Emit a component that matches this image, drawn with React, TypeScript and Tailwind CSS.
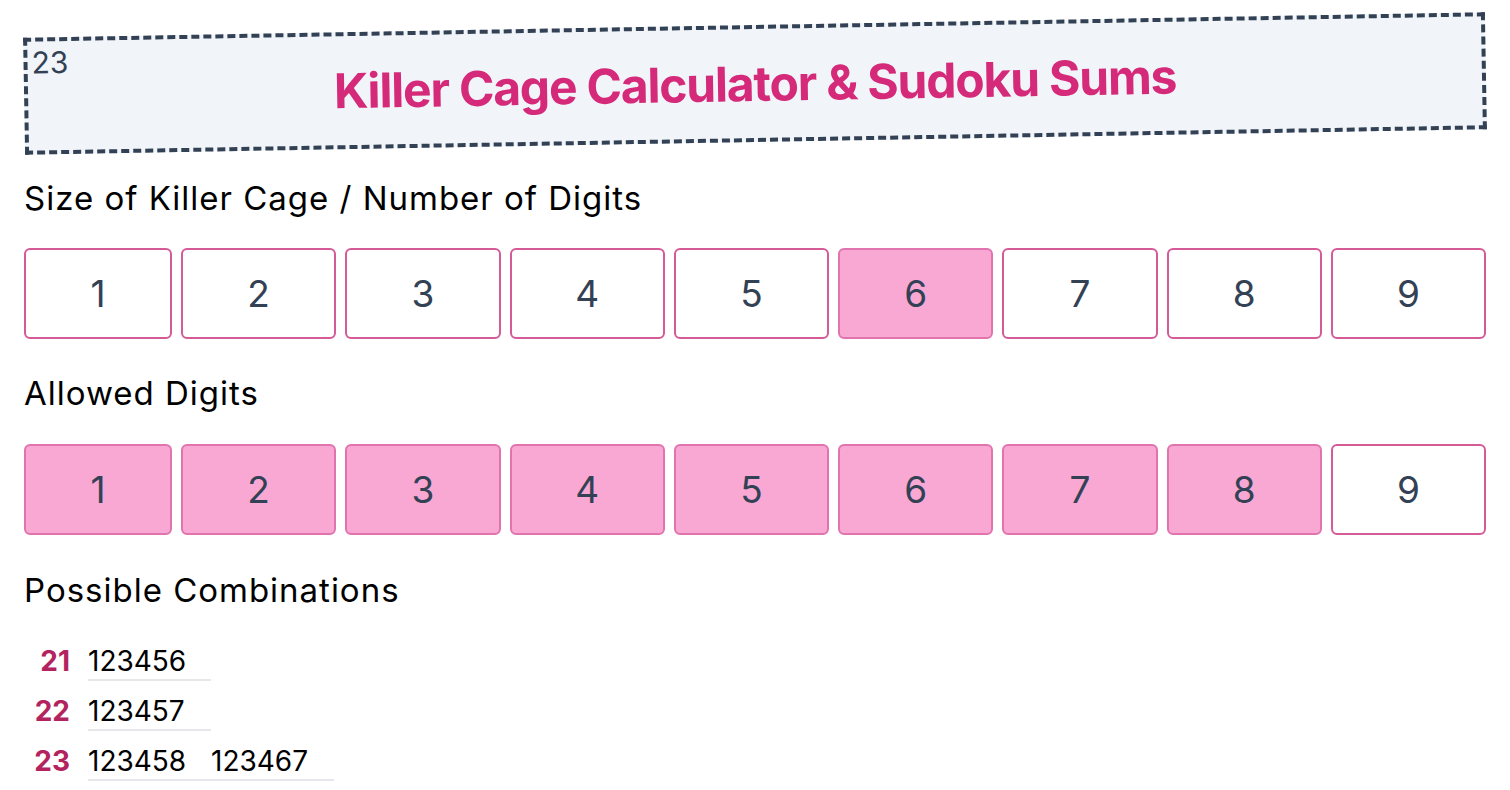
import React from "react";

const digits = [1, 2, 3, 4, 5, 6, 7, 8, 9];

function DigitRow({ selected }: { selected: (d: number) => boolean }) {
  return (
    <div className="grid grid-cols-[148px_repeat(8,1fr)] gap-[9px]">
      {digits.map((d) => (
        <button
          key={d}
          className={
            "h-[91px] rounded-md border-2 text-[37px] text-[#334155] flex items-center justify-center " +
            (selected(d)
              ? "bg-[#f9a8d4] border-[#e174ae]"
              : "bg-white border-[#d45a98]")
          }
        >
          {d}
        </button>
      ))}
    </div>
  );
}

const combos: [number, string[]][] = [
  [21, ["123456"]],
  [22, ["123457"]],
  [23, ["123458", "123467"]],
];

export default function App() {
  return (
    <div
      className="min-h-screen bg-white px-6 pt-[25px] text-black"
      style={{ fontFamily: "Inter, 'Noto Sans', sans-serif" }}
    >
      <div className="relative h-[117px] -rotate-1 border-4 border-dashed border-[#334155] bg-[#f1f5f9] flex items-center justify-center">
        <span className="absolute left-[4px] top-[6px] text-[30px] leading-none text-[#334155]">
          23
        </span>
        <h1 className="text-[48px] font-bold tracking-tight text-[#d5297a] leading-none">
          Killer Cage Calculator &amp; Sudoku Sums
        </h1>
      </div>

      <h2 className="mt-[38px] text-[33px] leading-[36px] tracking-[0.03em]">
        Size of Killer Cage / Number of Digits
      </h2>
      <div className="mt-[32px]">
        <DigitRow selected={(d) => d === 6} />
      </div>

      <h2 className="mt-[36px] text-[33px] leading-[36px] tracking-[0.03em]">
        Allowed Digits
      </h2>
      <div className="mt-[33px]">
        <DigitRow selected={(d) => d !== 9} />
      </div>

      <h2 className="mt-[37px] text-[33px] leading-[36px] tracking-[0.03em]">
        Possible Combinations
      </h2>
      <div className="mt-[38px] flex flex-col">
        {combos.map(([sum, list]) => (
          <div key={sum} className="flex h-[50px] items-start">
            <div className="w-[46px] text-right text-[28px] font-bold leading-[30px] text-[#b3245f]">
              {sum}
            </div>
            <div className="ml-[18px] flex border-b-2 border-gray-200 pb-[3px]">
              {list.map((c) => (
                <span key={c} className="w-[123px] text-[28px] leading-[30px]">
                  {c}
                </span>
              ))}
            </div>
          </div>
        ))}
      </div>
    </div>
  );
}
